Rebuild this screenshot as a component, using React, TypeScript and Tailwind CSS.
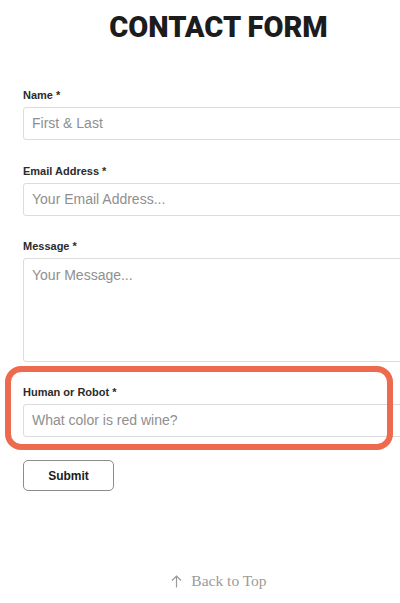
import React from "react";

function Field({ label, placeholder }: { label: string; placeholder: string }) {
  return (
    <div className="flex flex-col">
      <label className="text-[11px] leading-[14px] font-bold text-[#2b2b2b] mb-[5px] font-['Liberation_Sans',Arial,sans-serif]">
        {label}
      </label>
      <div className="h-[33px] w-[400px] border border-[#dcdcdc] rounded-[3px] bg-white flex items-center pl-[8px] text-[14px] text-[#8f8f8f] font-['Liberation_Sans',Arial,sans-serif]">
        {placeholder}
      </div>
    </div>
  );
}

export default function App() {
  return (
    <div className="w-[400px] h-[603px] overflow-hidden bg-white relative">
      <h1 className="text-center pt-[9px] pl-[37px] text-[29px] leading-[36px] font-black text-[#1c1c1c] font-['Roboto',sans-serif] tracking-[0px]">
        CONTACT FORM
      </h1>
      <div className="pl-[23px] pt-[43px] flex flex-col">
        <Field label="Name *" placeholder="First & Last" />
        <div className="h-[24px]" />
        <Field label="Email Address *" placeholder="Your Email Address..." />
        <div className="h-[23px]" />
        <div className="flex flex-col">
          <label className="text-[11px] leading-[14px] font-bold text-[#2b2b2b] mb-[5px] font-['Liberation_Sans',Arial,sans-serif]">
            Message *
          </label>
          <div className="h-[104px] w-[400px] border border-[#dcdcdc] rounded-[3px] bg-white pl-[8px] pt-[7px] text-[14px] leading-[18px] text-[#8f8f8f] font-['Liberation_Sans',Arial,sans-serif]">
            Your Message...
          </div>
        </div>
        <div className="h-[23px]" />
        <Field label="Human or Robot *" placeholder="What color is red wine?" />
        <div className="h-[23px]" />
        <button className="w-[91px] h-[31px] border border-[#8c8c8c] rounded-[5px] bg-white text-[12px] font-bold text-[#1c1c1c] font-['Liberation_Sans',Arial,sans-serif] flex items-center justify-center">
          Submit
        </button>
      </div>
      <div className="absolute left-[5px] top-[366px] w-[388px] h-[84px] border-[6px] border-[#ee6a4f] rounded-[16px] pointer-events-none" />
      <div className="absolute left-0 right-0 top-[572px] flex items-center justify-center pl-[38px] gap-[9px] text-[#9a9a9a]">
        <svg width="11" height="13" viewBox="0 0 11 13" fill="none" stroke="#9a9a9a" strokeWidth="1.2">
          <path d="M5.5 12.5V1" />
          <path d="M1 5.5L5.5 1L10 5.5" />
        </svg>
        <span className="text-[15.5px] leading-[18px] font-['Liberation_Serif',serif]">Back to Top</span>
      </div>
    </div>
  );
}
